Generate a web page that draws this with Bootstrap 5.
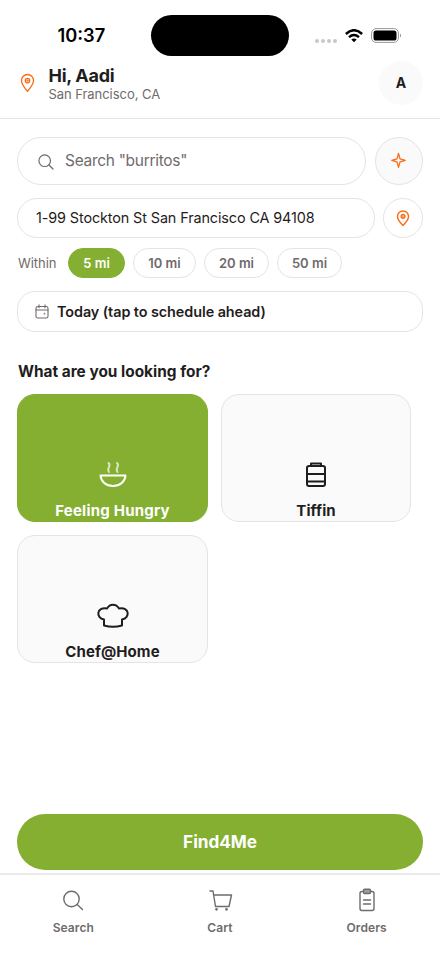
<!DOCTYPE html>
<html lang="en">
<head>
<meta charset="utf-8">
<meta name="viewport" content="width=device-width, initial-scale=1">
<title>Find4Me</title>
<link href="https://cdn.jsdelivr.net/npm/bootstrap@5.3.0/dist/css/bootstrap.min.css" rel="stylesheet">
<style>
:root{--brand:#84af31;--accent:#f96b16;--line:#e4e4e4;--ink:#1f1d1d;--soft:#706b6b;--panel:#fafafa}
body{font-family:Inter,sans-serif;color:var(--ink);background:#fff;width:440px;height:957px;overflow:hidden;line-height:1.2}
svg{display:block;flex:none;fill:none;stroke:currentColor;stroke-linecap:round;stroke-linejoin:round}
button{color:inherit}
.text-soft{color:var(--soft)}
.text-accent{color:var(--accent)}
.status{height:61px;padding:10px 38px 0 57px}
.clock{font-size:18.3px;font-weight:600;color:#000;width:94px;padding:1px 0 0 .5px}
.island{width:138px;height:41px;background:#000}
.cells{gap:2px;margin:10px 8px 0 0}
.cell{width:4px;height:4px;border-radius:50%;background:#c8c8c8}
.topbar{height:58px;padding:0 17px 0 18px;border-bottom:1px solid var(--line)}
.greeting{padding:0 0 12px 11.5px}
.hello{font-size:18px;font-weight:650;line-height:20px;letter-spacing:-.3px}
.city{font-size:13px;line-height:16px;letter-spacing:-.05px}
.avatar{width:44px;height:44px;background:var(--panel);font-size:14px;font-weight:650;margin-top:-13px}
.pin{margin-top:-13px}
.outlined{border:1px solid var(--line)}
.content{padding:18px 17px 0}
.search-box{width:349px;height:48px;font-size:15.500px;letter-spacing:-.300px;padding-left:20px;gap:11px;padding-top:1px}
.spark{width:48px;height:48px;background:var(--panel)}
.address-row{margin-top:13px}
.address{width:358px;height:40px;font-size:14.4px;padding-left:18px;letter-spacing:-.11px}
.locate{width:40px;height:40px}
.range-row{margin-top:10px;height:30px;gap:8px}
.within{font-size:13px;width:43px;letter-spacing:-.05px;padding:1px 0 0 1px;white-space:nowrap}
.mi{height:30px;font-size:13px;font-weight:600;color:var(--soft);padding:1px 0 0}
.mi.short{width:57px}
.mi.mid{width:63px}
.mi.wide{width:65px}
.mi.on{background:var(--brand);border-color:var(--brand);color:#fff}
.when{height:41px;margin-top:13px;border-radius:18px;font-size:14.4px;font-weight:600;padding-left:17px;gap:8px;letter-spacing:-.07px}
.ask{font-size:15.4px;font-weight:650;line-height:20px;margin:30px 0 12px;padding-left:1px}
.tiles{display:grid;grid-template-columns:191px 190px;gap:13px}
.tile{height:128px;border-radius:18px;background:var(--panel);font-size:15px;font-weight:650;line-height:20px;padding:63px 0 0;letter-spacing:.08px}
.tile svg{margin-bottom:9px}
.tile.on{background:var(--brand);border-color:var(--brand);color:#fff;letter-spacing:.22px}
.find{height:56px;margin:0 17px 3px;background:var(--brand);color:#fff;font-size:17.2px;font-weight:650;letter-spacing:-.05px}
.tabs{height:84px;border-top:2px solid #ebebeb;color:var(--soft);font-size:12px;font-weight:600;letter-spacing:.1px}
.tab-item{padding-top:12px;gap:8px}
</style>
</head>
<body class="d-flex flex-column">
<div class="status d-flex align-items-center">
  <div class="clock">10:37</div>
  <div class="island rounded-pill"></div>
  <div class="d-flex ms-auto align-items-center">
    <div class="cells d-flex"><i class="cell"></i><i class="cell"></i><i class="cell"></i><i class="cell"></i></div>
    <svg class="me-2 text-black" width="18" height="14" viewBox="0 0 18 14" stroke-width="2.4"><g style="stroke-linecap:butt"><path d="M.9 5Q9-2.600 17.100 5M4 8.200q5-4.300 10 0"/></g><path d="M6.300 10.500q2.700-2 5.400 0L9 13.200z" fill="#000" stroke="none"/></svg>
    <svg width="31" height="15" viewBox="0 0 31 15"><rect x=".6" y=".6" width="26.800" height="13.800" rx="4.500" stroke="#999"/><rect x="2.500" y="2.500" width="23" height="10" rx="2.600" fill="#000" stroke="none"/><path d="M29 5.500q2 2 0 4z" fill="#888" stroke="none"/></svg>
  </div>
</div>
<header class="topbar d-flex align-items-center">
  <svg class="pin text-accent" width="19" height="20" viewBox="0 0 19 20" stroke-width="1.300"><path d="M9.500 18.200C7.500 16 3.500 11.500 3.500 7.500a6 6 0 0 1 12 0c0 4-4 8.500-6 10.700z"/><circle cx="9.500" cy="7.600" r="2.200"/><circle cx="9.500" cy="7.600" r=".5"/></svg>
  <div class="greeting"><div class="hello">Hi, Aadi</div><div class="city text-soft">San Francisco, CA</div></div>
  <div class="avatar rounded-circle d-flex align-items-center justify-content-center ms-auto">A</div>
</header>
<main class="content flex-grow-1">
  <div class="d-flex align-items-center justify-content-between">
    <div class="search-box outlined rounded-pill d-flex align-items-center text-soft"><svg width="16" height="16" viewBox="0 0 16 16" stroke-width="1.200"><circle cx="6.700" cy="6.700" r="5.800"/><path d="m11 11 4 4"/></svg><span>Search "burritos"</span></div>
    <button class="spark outlined rounded-circle d-flex align-items-center justify-content-center p-0 text-accent"><svg width="16" height="18" viewBox="0 0 16 18" stroke-width="1.300"><path d="M7.500 1.300 9 6.800 14.200 8.300 9 9.800 7.500 15.300 6 9.800.8 8.300 6 6.800z"/></svg></button>
  </div>
  <div class="address-row d-flex align-items-center justify-content-between">
    <div class="address outlined rounded-pill d-flex align-items-center">1-99 Stockton St San Francisco CA 94108</div>
    <button class="locate outlined rounded-circle d-flex align-items-center justify-content-center p-0 bg-white text-accent"><svg width="14" height="17" viewBox="0 0 14 17" stroke-width="1.400"><path d="M7 15.500C5 13.500 1.500 9.800 1.500 6.500a5.500 5.500 0 0 1 11 0c0 3.300-3.500 7-5.500 9z"/><circle cx="7" cy="6.300" r="1.900" fill="#f96b1688"/></svg></button>
  </div>
  <div class="range-row d-flex align-items-center">
    <div class="within text-soft">Within</div>
    <button class="mi short outlined rounded-pill on">5 mi</button>
    <button class="mi mid outlined rounded-pill bg-white">10 mi</button>
    <button class="mi wide outlined rounded-pill bg-white">20 mi</button>
    <button class="mi wide outlined rounded-pill bg-white">50 mi</button>
  </div>
  <div class="when outlined d-flex align-items-center"><svg class="text-soft" width="14" height="15" viewBox="0 0 14 15" stroke-width="1.100"><rect x="1" y="2.500" width="12" height="11.500" rx="1.800"/><path d="M1 6h12M4 .8v3M10 .8v3"/><circle cx="9.500" cy="9.700" r=".3"/></svg><span>Today (tap to schedule ahead)</span></div>
  <h1 class="ask">What are you looking for?</h1>
  <div class="tiles">
    <button class="tile outlined on d-flex flex-column align-items-center justify-content-start">
      <svg width="34" height="34" viewBox="0 0 34 34" stroke-width="2"><path d="M4.500 17.500h25c-.4 6-5.500 10.500-12.500 10.500S4.900 23.500 4.500 17.500z"/><path d="M12.500 5c3.500 3-2.500 5 .5 9M21 5c3.500 3-2.500 5 .5 9" opacity=".7"/></svg>Feeling Hungry</button>
    <button class="tile outlined d-flex flex-column align-items-center justify-content-start">
      <svg width="34" height="34" viewBox="0 0 34 34" stroke-width="2"><rect x="8" y="8" width="18" height="20" rx="2"/><path d="M12 8V5.500h10V8M8 16h18M8 23.500h18"/></svg>Tiffin</button>
    <button class="tile outlined d-flex flex-column align-items-center justify-content-start">
      <svg width="34" height="34" viewBox="0 0 34 34" stroke-width="2"><path d="M8 20.500C-.5 19 .500 7.500 11 9.500c3-5 9-5 12 0 10.500-2 11.500 9.500 3 11v6q-9 2.500-18 0z"/></svg>Chef@Home</button>
  </div>
</main>
<button class="find btn rounded-pill">Find4Me</button>
<nav class="tabs row g-0 text-center">
  <div class="tab-item col d-flex flex-column align-items-center"><svg width="24" height="26" viewBox="0 0 24 26" stroke-width="1.400"><circle cx="10.500" cy="12" r="7.700"/><path d="m16.200 17.500 5.300 5"/></svg>Search</div>
  <div class="tab-item col d-flex flex-column align-items-center"><svg width="26" height="26" viewBox="0 0 26 26" stroke-width="1.400"><path d="M3 4h3l2.500 15.500H22M6.500 8H24.500L22 19.500"/><circle cx="9.500" cy="22.300" r=".7"/><circle cx="19.500" cy="22.300" r=".7"/></svg>Cart</div>
  <div class="tab-item col d-flex flex-column align-items-center"><svg width="24" height="26" viewBox="0 0 24 26" stroke-width="1.400"><rect x="5" y="4.500" width="14" height="19" rx="2"/><rect x="8.500" y="2.200" width="7" height="4.300" rx="1.200" fill="#a09d9d"/><path d="M8.500 13h7M8.500 17h7"/></svg>Orders</div>
</nav>
</body>
</html>
